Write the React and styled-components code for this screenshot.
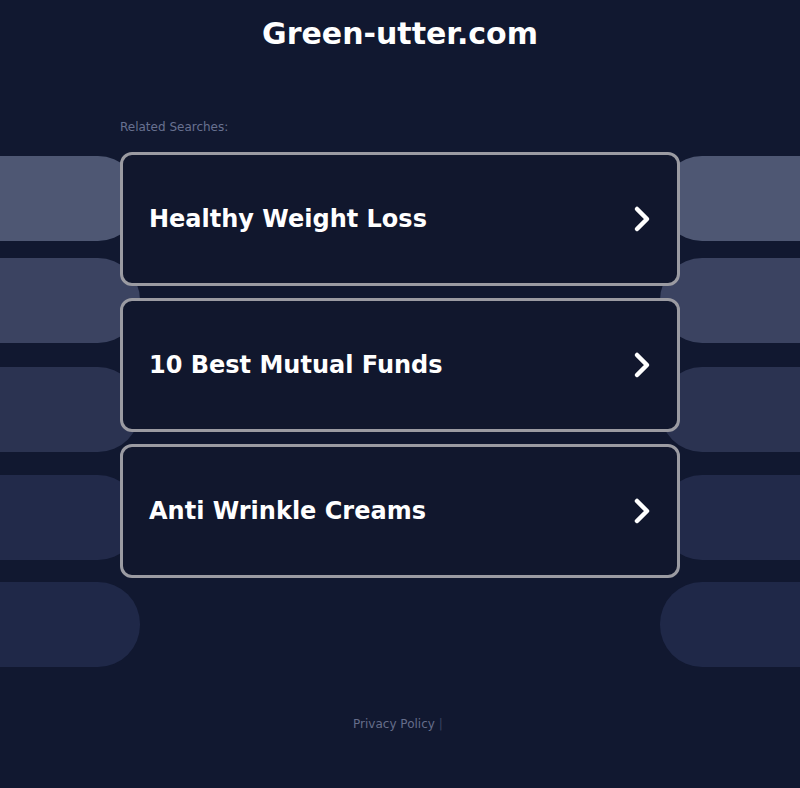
import React from 'react';
import styled, { createGlobalStyle } from "styled-components";

const searches = ["Healthy Weight Loss", "10 Best Mutual Funds", "Anti Wrinkle Creams"];
const pills = [
    { color: "#4e5773", gap: 0 },
    { color: "#3b4361", gap: 17 },
    { color: "#2b3351", gap: 24 },
    { color: "#222a4a", gap: 23 },
    { color: "#1f2848", gap: 22 },
];

export default function App() {
    return (
        <>
            <Global />
            <Page>
                <Backdrop>
                    {pills.map((p) => (
                        <PillRow key={p.color} $gap={p.gap}>
                            <Pill $color={p.color} $side="left" />
                            <Pill $color={p.color} $side="right" />
                        </PillRow>
                    ))}
                </Backdrop>
                <Title>Green-utter.com</Title>
                <Main>
                    <Label>Related Searches:</Label>
                    <List>
                        {searches.map((s) => (
                            <Item key={s} href="#">
                                <span>{s}</span>
                                <Chevron viewBox="0 0 20 30">
                                    <polyline points="5,5 15,15 5,25" />
                                </Chevron>
                            </Item>
                        ))}
                    </List>
                </Main>
                <Footer>
                    <FooterLink href="#">Privacy Policy</FooterLink>
                    <Sep>|</Sep>
                </Footer>
            </Page>
        </>
    )
}

const Global = createGlobalStyle `
    body {
        margin: 0;
        background: #111830;
        font-family: "DejaVu Sans", sans-serif;
    }
`;
const Page = styled.div `
    position: relative;
    min-height: 788px;
    overflow: hidden;
    padding-top: 16px;
    box-sizing: border-box;
`;
const Backdrop = styled.div `
    position: absolute;
    top: 156px;
    left: 0;
    right: 0;
    display: flex;
    flex-direction: column;
    z-index: 0;
`;
const PillRow = styled.div `
    display: flex;
    justify-content: space-between;
    margin-top: ${(p) => p.$gap}px;
`;
const Pill = styled.div `
    width: 140px;
    height: 85px;
    background: ${(p) => p.$color};
    border-radius: ${(p) => (p.$side === "left" ? "0 42px 42px 0" : "42px 0 0 42px")};
`;
const Title = styled.h1 `
    position: relative;
    margin: 0;
    text-align: center;
    color: #fff;
    font-size: 30px;
    font-weight: bold;
    line-height: 36px;
`;
const Main = styled.div `
    position: relative;
    z-index: 1;
    width: 560px;
    margin: 68px auto 0;
`;
const Label = styled.div `
    color: #687190;
    font-size: 12px;
    line-height: 14px;
    margin-bottom: 18px;
`;
const List = styled.div `
    display: flex;
    flex-direction: column;
    gap: 12px;
`;
const Item = styled.a `
    display: flex;
    align-items: center;
    justify-content: space-between;
    height: 134px;
    box-sizing: border-box;
    padding: 0 25px 0 26px;
    border: 3px solid #9b9ba2;
    border-radius: 12px;
    background: #11172d;
    color: #fff;
    font-size: 24px;
    font-weight: bold;
    text-decoration: none;
`;
const Chevron = styled.svg `
    width: 20px;
    height: 30px;
    fill: none;
    stroke: #fff;
    stroke-width: 4.5;
    stroke-linecap: round;
    stroke-linejoin: round;
`;
const Footer = styled.div `
    position: relative;
    margin-top: 139px;
    padding-right: 4px;
    text-align: center;
    font-size: 12px;
    line-height: 14px;
`;
const FooterLink = styled.a `
    color: #656d8a;
    text-decoration: none;
`;
const Sep = styled.span `
    color: #3a4260;
    margin-left: 4px;
`;
